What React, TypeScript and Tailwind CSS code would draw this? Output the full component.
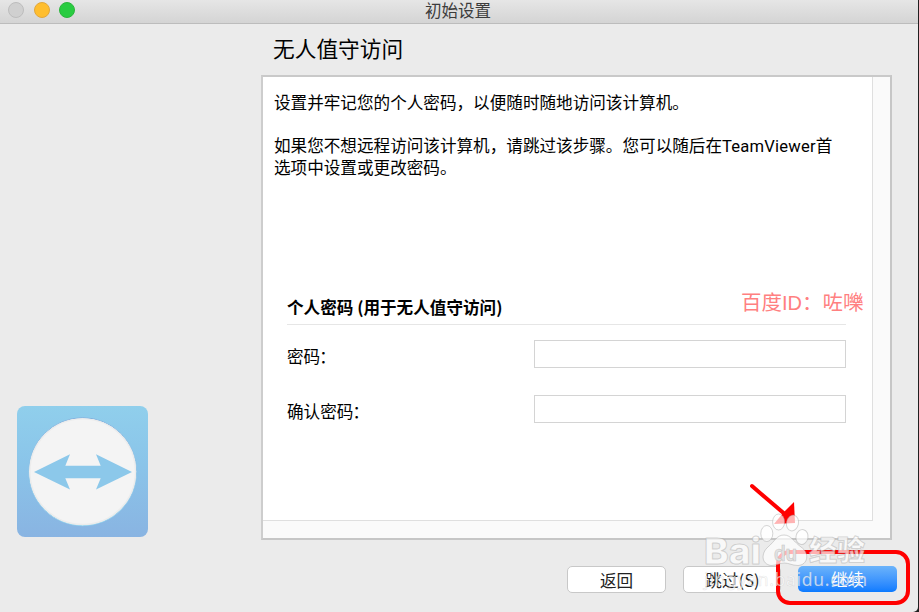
type FieldProps = {
  id: string;
  label: string;
};

const Field = ({ id, label }: FieldProps) => (
  <div className="flex h-7 items-center">
    <label htmlFor={id} className="w-[247px] pt-[4px] leading-[22px]">
      {label}
      <span className="-ml-[1px]">：</span>
    </label>
    <input
      id={id}
      type="password"
      className="h-7 w-[312px] border border-[#d4d4d4] bg-white px-2 outline-none"
    />
  </div>
);

const TitleBar = () => (
  <header className="relative flex h-6 items-start justify-center border-b border-[#bcbcbc] bg-gradient-to-b from-[#e6e6e6] to-[#d4d4d4]">
    <div className="absolute top-[2px] left-2 flex gap-[9.5px]">
      <span className="size-4 rounded-full border border-[#bdbdbd] bg-[#d0d0d0]" />
      <span className="size-4 rounded-full border border-[#e2a73a] bg-[#ffbe2f]" />
      <span className="size-4 rounded-full border border-[#2bb53c] bg-[#29cc41]" />
    </div>
    <h1 className="pr-[2px] text-[16.5px] leading-[21px] text-[#3c3c3c]">初始设置</h1>
  </header>
);

const Logo = () => (
  <svg viewBox="0 0 131 131" className="size-[131px]">
    <defs>
      <linearGradient id="tile" x1="0" y1="0" x2="0" y2="1">
        <stop offset="0" stopColor="#90cfec" />
        <stop offset="0.45" stopColor="#8ac4e9" />
        <stop offset="1" stopColor="#89b4e2" />
      </linearGradient>
      <linearGradient id="ring" x1="0" y1="0" x2="0" y2="1">
        <stop offset="0" stopColor="#7fb0de" />
        <stop offset="1" stopColor="#8fd2ee" />
      </linearGradient>
    </defs>
    <rect width="131" height="131" rx="8" fill="url(#tile)" />
    <circle cx="65.7" cy="65.7" r="54" fill="#f4f4f4" stroke="url(#ring)" />
    <circle cx="65.7" cy="65.7" r="52.8" fill="none" stroke="#ececec" strokeWidth="1.4" />
    <path
      d="M17 66 L53 48.3 L48.3 59.7 H83.7 L79 48.3 L115 66 L79 83.5 L83.7 72.3 H48.3 L53 83.5 Z"
      fill="#8cc8ea"
    />
  </svg>
);

const Watermark = () => (
  <svg
    viewBox="0 0 180 90"
    className="pointer-events-none absolute top-[510px] left-[700px] h-[90px] w-[180px]"
  >
    <g
      fill="#ffffff"
      fillOpacity="0.7"
      stroke="#999999"
      strokeOpacity="0.4"
      strokeWidth="1"
      strokeLinejoin="round"
    >
      <ellipse cx="66.8" cy="23.5" rx="6" ry="8" />
      <ellipse cx="78.6" cy="12" rx="6" ry="8" />
      <ellipse cx="92.5" cy="13" rx="6" ry="8" transform="rotate(12 92.5 13)" />
      <ellipse cx="102" cy="27" rx="6" ry="7.5" transform="rotate(12 102 27)" />
      <path d="M84 25 C91 25 94 32 101 37 C110 43 108 55 98 55.5 C92 55.5 89 53 84.5 53 C80 53 76 55.5 71 55.5 C61 54 61 43 68 37 C75 31 77 25 84 25 Z" />
      <text
        x="4"
        y="54"
        fontSize="36"
        fontWeight="800"
        fontFamily="Inter, sans-serif"
        textLength="57"
        lengthAdjust="spacingAndGlyphs"
      >
        Bai
      </text>
      <text
        x="109"
        y="51"
        fontSize="28"
        fontWeight="900"
        fontFamily="Noto Sans CJK SC, sans-serif"
        textLength="56"
        lengthAdjust="spacingAndGlyphs"
      >
        经验
      </text>
    </g>
    <text
      x="74"
      y="51"
      fontSize="21"
      fontWeight="600"
      fill="#e3e3e3"
      stroke="#c4c4c4"
      strokeWidth="0.6"
      fontFamily="Inter, sans-serif"
      textLength="23"
      lengthAdjust="spacingAndGlyphs"
    >
      du
    </text>
    <text
      x="4"
      y="76"
      fontSize="17.5"
      fill="#ffffff"
      fillOpacity="0.7"
      stroke="#999999"
      strokeOpacity="0.22"
      strokeWidth="0.7"
      fontFamily="Noto Sans, sans-serif"
      textLength="163"
    >
      jingyan.baidu.com
    </text>
  </svg>
);

const Pointer = () => (
  <svg
    viewBox="0 0 60 50"
    className="pointer-events-none absolute top-[480px] left-[745px] h-[50px] w-[60px]"
  >
    <path d="M7 6 L42 36" stroke="#ff0000" strokeWidth="4" strokeLinecap="round" />
    <path d="M49 22 L50 43 L29 44 L38 33 Z" fill="#ff0000" />
  </svg>
);

const App = () => {
  return (
    <div className="relative h-[612px] w-[919px] overflow-hidden bg-[#202020] font-['Noto_Sans_CJK_SC',sans-serif] text-[16.6px] text-black">
      <div className="h-[612px] w-[918px] rounded-br-[5px] bg-[#ebebeb]">
        <TitleBar />

        <div className="flex">
          <aside className="flex h-[513px] w-[261px] items-end pl-[17px]">
            <Logo />
          </aside>

          <main className="w-[631px]">
            <h2 className="mt-[8px] mb-[12px] pl-3 text-[21.7px] leading-[31px]">无人值守访问</h2>

            <section className="h-[465px] border-2 border-t-[#c9c9c9] border-r-[#c6c6c6] border-b-[#c6c6c6] border-l-[#cdcdcd] bg-[#fafafa]">
              <div className="h-[444px] w-[610px] border-r border-b border-[#dfdfdf] bg-white pt-[14px] pl-[11px] leading-[22px]">
                <p>设置并牢记您的个人密码，以便随时随地访问该计算机。</p>
                <p className="mt-[21px] w-[580px]">
                  如果您不想远程访问该计算机，请跳过该步骤。您可以随后在
                  <span className="font-['Roboto',sans-serif] leading-none tracking-[0.2px]">
                    TeamViewer
                  </span>
                  首
                  <br />
                  选项中设置或更改密码。
                </p>

                <form className="mt-[118px] ml-[13px] w-[559px]">
                  <h3 className="h-[29px] border-b border-[#e6e6e6] font-bold">
                    个人密码 (用于无人值守访问)
                  </h3>
                  <div className="mt-[15px] flex flex-col gap-[27px]">
                    <Field id="password" label="密码" />
                    <Field id="confirm" label="确认密码" />
                  </div>
                </form>
              </div>
            </section>

            <footer className="mt-[26px] flex w-[636px] justify-end gap-[17px]">
              <button className="h-[27px] w-[99px] rounded-[5px] border border-[#c8c8c8] bg-white leading-6 text-[#222]">
                返回
              </button>
              <button className="h-[27px] w-[98px] rounded-[5px] border border-[#c8c8c8] bg-white pl-px leading-6 text-[#222]">
                跳过(S)
              </button>
              <button className="h-[26px] w-[99px] rounded-[5px] bg-gradient-to-b from-[#6bb3fa] to-[#0a7bff] leading-6 text-white">
                继续
              </button>
            </footer>
          </main>
        </div>
      </div>

      <span className="absolute top-[289px] left-[741px] text-[20.5px] leading-6 whitespace-nowrap text-[#ff8080]">
        百度<span className="font-['Liberation_Sans',sans-serif] text-[20px] leading-none">ID</span>：咗嚛
      </span>
      <Pointer />
      <div className="absolute top-[550px] left-[776px] h-[55px] w-[134px] rounded-[14px] border-4 border-[#ff0000]" />
      <Watermark />
    </div>
  );
};

export default App;
